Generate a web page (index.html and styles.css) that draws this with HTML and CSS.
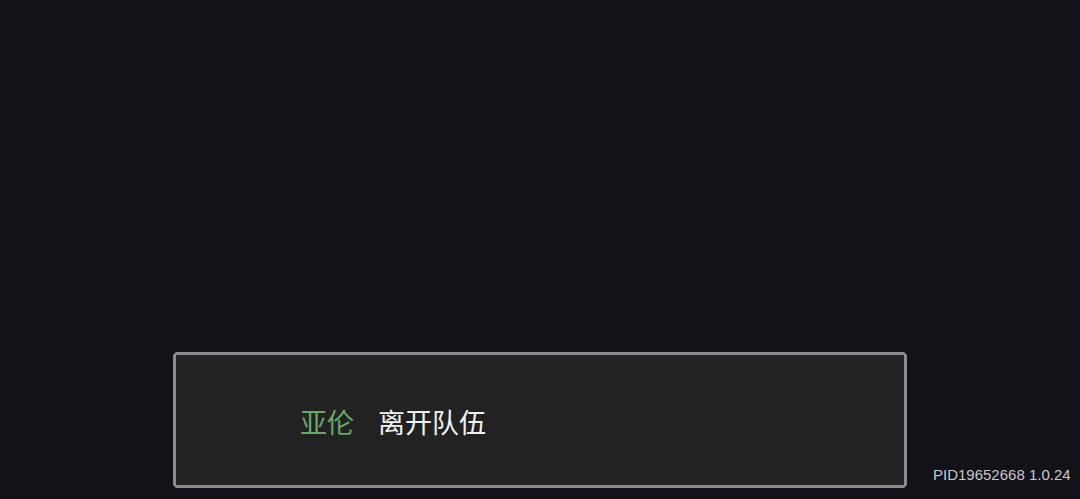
FILE: index.html
```html
<!DOCTYPE html>
<html lang="zh">
<head>
<meta charset="utf-8">
<link rel="stylesheet" href="styles.css">
</head>
<body>
<div class="screen">
  <div class="row">
    <div class="dialog">
      <div class="dialog-inner">
        <span class="name">亚伦</span><span class="msg">离开队伍</span>
      </div>
    </div>
    <div class="pid">PID19652668 1.0.24</div>
  </div>
</div>
</body>
</html>
```
FILE: styles.css
```css
html, body {
  margin: 0;
  padding: 0;
  background: #131218;
}
.screen {
  width: 1080px;
  height: 499px;
  display: flex;
  flex-direction: column;
  justify-content: flex-start;
  overflow: hidden;
}
.row {
  display: flex;
  align-items: flex-end;
  padding-left: 173px;
  margin-top: 352px;
}
.dialog {
  width: 734px;
  height: 136px;
  box-sizing: border-box;
  background: #8c8b92;
  padding: 3px;
  clip-path: polygon(3px 0, calc(100% - 3px) 0, 100% 3px, 100% calc(100% - 3px), calc(100% - 3px) 100%, 3px 100%, 0 calc(100% - 3px), 0 3px);
}
.dialog-inner {
  width: 100%;
  height: 100%;
  background: #222222;
  display: flex;
  align-items: center;
  padding-left: 124px;
  box-sizing: border-box;
  font-family: "Noto Sans CJK SC", sans-serif;
  font-size: 27px;
  line-height: 1;
  padding-top: 3px;
}
.name {
  color: #6aa569;
  margin-right: 24px;
}
.msg {
  color: #f2f2f2;
}
.pid {
  margin-left: 26px;
  margin-bottom: 6px;
  font-family: "Liberation Sans", Arial, sans-serif;
  font-size: 15px;
  color: #c8c8cc;
  line-height: 1;
  white-space: nowrap;
}
```
